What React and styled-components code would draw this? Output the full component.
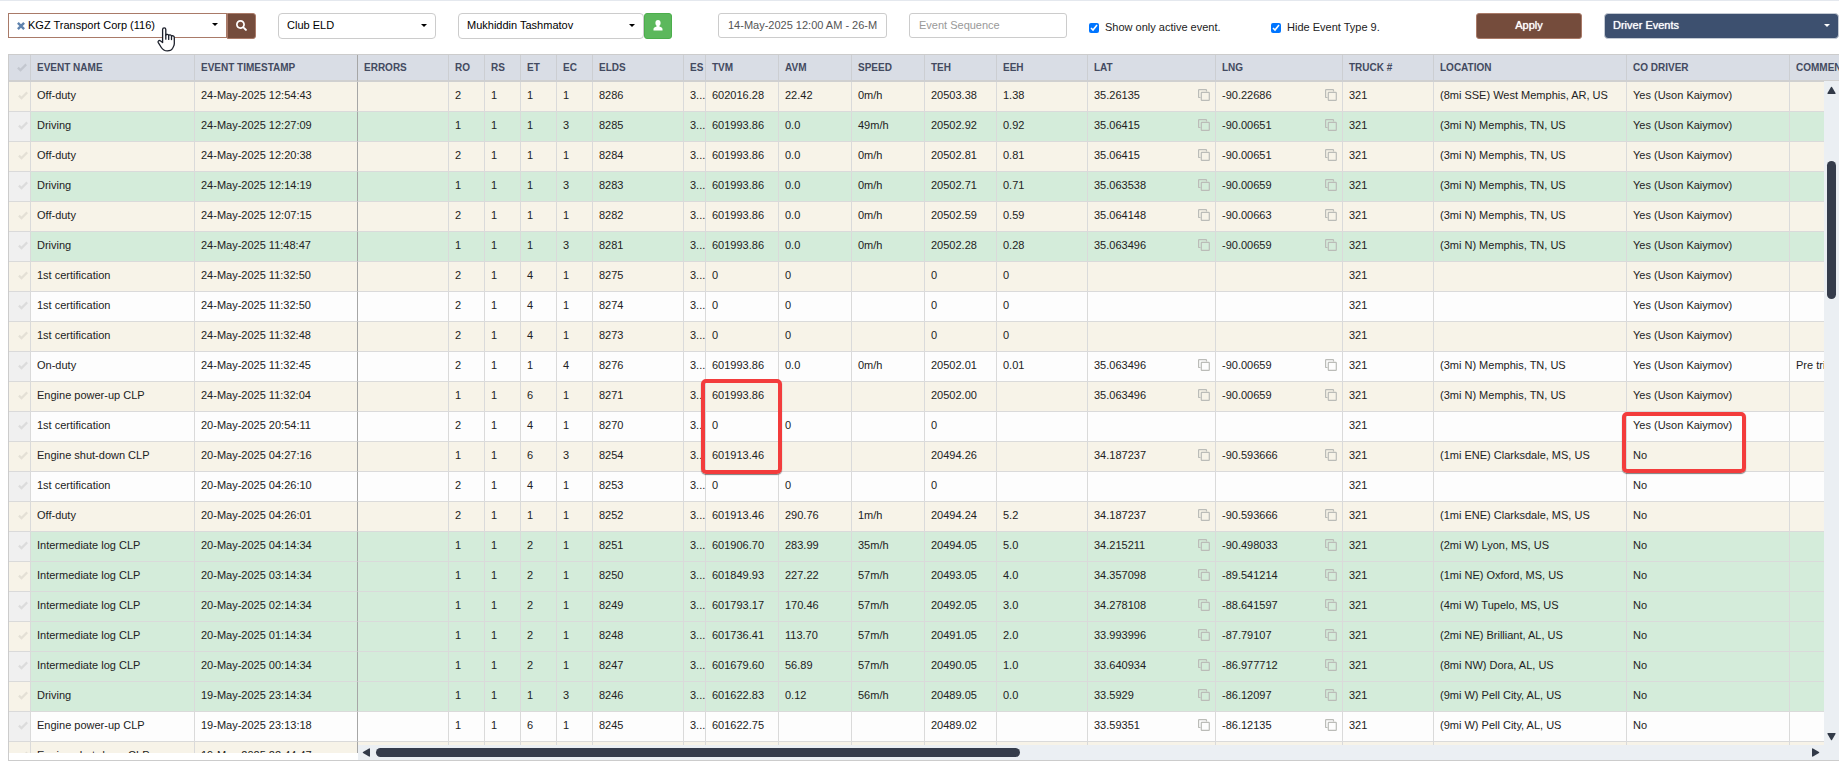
import React, { useState } from 'react'
import styled, { createGlobalStyle } from 'styled-components'
import { FaSearch } from 'react-icons/fa'

const GlobalStyle = createGlobalStyle`
  * {
    box-sizing: border-box;
  }

  body {
    margin: 0;
    background: #fff;
    color: #222;
    font-family: "Liberation Sans", Arial, sans-serif;
    font-size: 11px;
  }

  button, input, select {
    font: inherit;
    margin: 0;
  }
`;

const Page = styled.div`
  height: 100vh;
  display: flex;
  flex-direction: column;
  padding: 0 0 7px 8px;
  border-top: 1px solid #e4e8ee;
  overflow: hidden;
`;

const Toolbar = styled.form`
  display: grid;
  grid-template-columns: 248fr 158fr 238fr 169fr 158fr 160fr 183fr 106fr 235fr;
  column-gap: 22px;
  align-items: start;
  padding: 12px 0 15px;
`;

const Group = styled.div`
  display: flex;
  min-width: 0;
  padding-right: ${({ $end }) => $end || 0}px;
`;

const SelectBox = styled.div`
  position: relative;
  flex: 1;
  min-width: 0;
  height: ${({ $active }) => ($active ? 25 : 26)}px;
  display: flex;
  align-items: center;
  padding: 0 8px;
  color: ${({ $dark }) => ($dark ? '#fff' : '#000')};
  background: ${({ $dark }) => ($dark ? '#3d506f' : '#fff')};
  border: 1px solid ${({ $active, $dark }) => ($active ? '#a97a68' : $dark ? '#c4cad3' : '#ccc')};
  border-radius: ${({ $active }) => ($active ? '0' : '4px')};
`;

const Select = styled.select`
  flex: 1;
  min-width: 0;
  height: 23px;
  padding: 0 0 2px;
  border: none;
  outline: none;
  appearance: none;
  background: transparent;
  color: inherit;
  text-shadow: ${({ $dark }) => ($dark ? '0 0 1px #fff' : 'none')};
`;

const Caret = styled.span`
  margin-bottom: 2px;
  border: 3px solid transparent;
  border-top-color: currentColor;
  border-bottom: none;
`;

const ClearButton = styled.button`
  display: flex;
  padding: 0;
  margin-right: 3px;
  border: none;
  background: none;
  color: #5f83ae;
`;

const IconButton = styled.button`
  width: ${({ $green }) => ($green ? 28 : 29)}px;
  height: 26px;
  display: flex;
  align-items: center;
  justify-content: center;
  padding: 0 0 2px;
  color: #fff;
  background: ${({ $green }) => ($green ? '#5cb85c' : '#754c3c')};
  border: 1px solid ${({ $green }) => ($green ? '#4cae4c' : '#a97a68')};
  border-radius: ${({ $green }) => ($green ? '3px' : '0 3px 3px 0')};
`;

const TextInput = styled.input`
  width: 100%;
  height: 25px;
  padding: 0 9px 2px;
  color: #555;
  background: #fff;
  border: 1px solid #ccc;
  border-radius: 3px;
  outline: none;

  &::placeholder {
    color: #999;
  }
`;

const CheckLabel = styled.label`
  display: flex;
  align-items: center;
  gap: 6px;
  padding-top: 8px;
  white-space: nowrap;

  input {
    width: 10px;
    height: 10px;
    margin: 1px 0 0;
    accent-color: #0075ff;
  }
`;

const ApplyButton = styled.button`
  height: 26px;
  padding: 0 0 2px;
  color: #fff;
  background: #754c3c;
  border: 1px solid #a97a68;
  border-radius: 3px;
  text-shadow: 0 0 1px #fff;
`;

const Hand = styled.svg`
  position: absolute;
  left: 148px;
  top: 13px;
  z-index: 3;
  pointer-events: none;
`;

const Frame = styled.div`
  position: relative;
  flex: 1;
  min-height: 0;
  border: 1px solid #ccc;
  border-right: none;
`;

const Viewport = styled.div`
  height: calc(100% - 7px);
  overflow: hidden;
`;

const Table = styled.table`
  table-layout: fixed;
  width: 1950px;
  border-collapse: separate;
  border-spacing: 0;
`;

const Th = styled.th`
  height: 27px;
  padding: 0 0 0 6px;
  overflow: hidden;
  white-space: nowrap;
  text-align: left;
  font-size: 10px;
  font-weight: 700;
  color: #434a60;
  background: #d9dde5;
  border-right: 1px solid ${({ $pinned }) => ($pinned ? '#a6a6a6' : '#ccced2')};
  border-bottom: 2px solid #d0d0d0;
`;

const CheckTh = styled(Th)`
  padding-left: 8px;
  color: #c3c7cf;

  svg {
    display: block;
  }
`;

const Row = styled.tr`
  background: ${({ $driving, $odd }) => ($driving ? '#d4ecda' : $odd ? '#fdfdfd' : '#f7f3e8')};
`;

const Td = styled.td`
  position: relative;
  height: 30px;
  padding: 0 0 3px 6px;
  white-space: nowrap;
  border-right: 1px solid ${({ $pinned }) => ($pinned ? '#a6a6a6' : '#dadada')};
  border-bottom: 1px solid #dadada;
`;

const CheckTd = styled(Td)`
  padding: 0 0 2px 9px;
  color: ${({ $odd }) => ($odd ? '#dcdcdc' : '#e4e0d6')};
  background: ${({ $odd }) => ($odd ? '#f0f0f0' : '#f7f3e8')};

  svg {
    display: block;
  }
`;

const Coordinate = styled.div`
  display: flex;
  align-items: center;
  justify-content: space-between;
  padding-right: 5px;
`;

const CopyButton = styled.button`
  display: flex;
  height: 12px;
  padding: 0;
  border: none;
  background: none;
  color: #bbbcb8;
`;

const Mark = styled.span`
  position: absolute;
  z-index: 2;
  left: -5px;
  top: ${({ $top }) => $top}px;
  width: ${({ $width }) => $width}px;
  height: ${({ $height }) => $height}px;
  border: 4px solid #f33c3c;
  border-radius: 5px;
  box-shadow: 0 1px 1px rgba(0, 0, 0, 0.5);
  pointer-events: none;
`;

const ScrollBar = styled.div`
  position: absolute;
  z-index: 1;
  right: 0;
  bottom: 0;
  display: flex;
  align-items: center;
  background: #ebeff3;
  color: #323a48;
`;

const HorizontalBar = styled(ScrollBar)`
  left: 349px;
  height: 15px;
  padding: 0 19px 0 4px;
`;

const VerticalBar = styled(ScrollBar)`
  top: 26px;
  bottom: 15px;
  width: 15px;
  flex-direction: column;
  padding: 5px 0 4px;
`;

const ArrowButton = styled.button`
  display: flex;
  padding: 0;
  border: none;
  background: none;
  color: inherit;
`;

const Track = styled.div`
  flex: 1;
  display: flex;
  flex-direction: ${({ $vertical }) => ($vertical ? 'column' : 'row')};
  padding: ${({ $vertical }) => ($vertical ? '66px 0 0' : '0 5px')};
`;

const Thumb = styled.div`
  width: ${({ $vertical }) => ($vertical ? '9px' : '45%')};
  height: ${({ $vertical }) => ($vertical ? '138px' : '9px')};
  border-radius: 5px;
  background: #353c4b;
`;

const columns = [
  { key: 'name', label: 'EVENT NAME', width: 164 },
  { key: 'time', label: 'EVENT TIMESTAMP', width: 163, pinned: true },
  { key: 'errors', label: 'ERRORS', width: 91 },
  { key: 'ro', label: 'RO', width: 36 },
  { key: 'rs', label: 'RS', width: 36 },
  { key: 'et', label: 'ET', width: 36 },
  { key: 'ec', label: 'EC', width: 36 },
  { key: 'elds', label: 'ELDS', width: 91 },
  { key: 'es', label: 'ES', width: 22 },
  { key: 'tvm', label: 'TVM', width: 73 },
  { key: 'avm', label: 'AVM', width: 73 },
  { key: 'speed', label: 'SPEED', width: 73 },
  { key: 'teh', label: 'TEH', width: 72 },
  { key: 'eeh', label: 'EEH', width: 91 },
  { key: 'lat', label: 'LAT', width: 128, copy: true },
  { key: 'lng', label: 'LNG', width: 127, copy: true },
  { key: 'truck', label: 'TRUCK #', width: 91 },
  { key: 'location', label: 'LOCATION', width: 193 },
  { key: 'codriver', label: 'CO DRIVER', width: 163 },
  { key: 'comment', label: 'COMMENT', width: 169 },
];

const uson = 'Yes (Uson Kaiymov)';
const memphis = '(3mi N) Memphis, TN, US';
const clarksdale = '(1mi ENE) Clarksdale, MS, US';

// name, time, ro, rs, et, ec, elds, tvm, avm, speed, teh, eeh, lat, lng, location, codriver, comment
const events = [
  ['Off-duty', '24-May-2025 12:54:43', 2, 1, 1, 1, 8286, '602016.28', '22.42', '0m/h', '20503.38', '1.38', '35.26135', '-90.22686', '(8mi SSE) West Memphis, AR, US', uson],
  ['Driving', '24-May-2025 12:27:09', 1, 1, 1, 3, 8285, '601993.86', '0.0', '49m/h', '20502.92', '0.92', '35.06415', '-90.00651', memphis, uson],
  ['Off-duty', '24-May-2025 12:20:38', 2, 1, 1, 1, 8284, '601993.86', '0.0', '0m/h', '20502.81', '0.81', '35.06415', '-90.00651', memphis, uson],
  ['Driving', '24-May-2025 12:14:19', 1, 1, 1, 3, 8283, '601993.86', '0.0', '0m/h', '20502.71', '0.71', '35.063538', '-90.00659', memphis, uson],
  ['Off-duty', '24-May-2025 12:07:15', 2, 1, 1, 1, 8282, '601993.86', '0.0', '0m/h', '20502.59', '0.59', '35.064148', '-90.00663', memphis, uson],
  ['Driving', '24-May-2025 11:48:47', 1, 1, 1, 3, 8281, '601993.86', '0.0', '0m/h', '20502.28', '0.28', '35.063496', '-90.00659', memphis, uson],
  ['1st certification', '24-May-2025 11:32:50', 2, 1, 4, 1, 8275, '0', '0', '', '0', '0', '', '', '', uson],
  ['1st certification', '24-May-2025 11:32:50', 2, 1, 4, 1, 8274, '0', '0', '', '0', '0', '', '', '', uson],
  ['1st certification', '24-May-2025 11:32:48', 2, 1, 4, 1, 8273, '0', '0', '', '0', '0', '', '', '', uson],
  ['On-duty', '24-May-2025 11:32:45', 2, 1, 1, 4, 8276, '601993.86', '0.0', '0m/h', '20502.01', '0.01', '35.063496', '-90.00659', memphis, uson, 'Pre trip inspection'],
  ['Engine power-up CLP', '24-May-2025 11:32:04', 1, 1, 6, 1, 8271, '601993.86', '', '', '20502.00', '', '35.063496', '-90.00659', memphis, uson],
  ['1st certification', '20-May-2025 20:54:11', 2, 1, 4, 1, 8270, '0', '0', '', '0', '', '', '', '', uson],
  ['Engine shut-down CLP', '20-May-2025 04:27:16', 1, 1, 6, 3, 8254, '601913.46', '', '', '20494.26', '', '34.187237', '-90.593666', clarksdale, 'No'],
  ['1st certification', '20-May-2025 04:26:10', 2, 1, 4, 1, 8253, '0', '0', '', '0', '', '', '', '', 'No'],
  ['Off-duty', '20-May-2025 04:26:01', 2, 1, 1, 1, 8252, '601913.46', '290.76', '1m/h', '20494.24', '5.2', '34.187237', '-90.593666', clarksdale, 'No'],
  ['Intermediate log CLP', '20-May-2025 04:14:34', 1, 1, 2, 1, 8251, '601906.70', '283.99', '35m/h', '20494.05', '5.0', '34.215211', '-90.498033', '(2mi W) Lyon, MS, US', 'No'],
  ['Intermediate log CLP', '20-May-2025 03:14:34', 1, 1, 2, 1, 8250, '601849.93', '227.22', '57m/h', '20493.05', '4.0', '34.357098', '-89.541214', '(1mi NE) Oxford, MS, US', 'No'],
  ['Intermediate log CLP', '20-May-2025 02:14:34', 1, 1, 2, 1, 8249, '601793.17', '170.46', '57m/h', '20492.05', '3.0', '34.278108', '-88.641597', '(4mi W) Tupelo, MS, US', 'No'],
  ['Intermediate log CLP', '20-May-2025 01:14:34', 1, 1, 2, 1, 8248, '601736.41', '113.70', '57m/h', '20491.05', '2.0', '33.993996', '-87.79107', '(2mi NE) Brilliant, AL, US', 'No'],
  ['Intermediate log CLP', '20-May-2025 00:14:34', 1, 1, 2, 1, 8247, '601679.60', '56.89', '57m/h', '20490.05', '1.0', '33.640934', '-86.977712', '(8mi NW) Dora, AL, US', 'No'],
  ['Driving', '19-May-2025 23:14:34', 1, 1, 1, 3, 8246, '601622.83', '0.12', '56m/h', '20489.05', '0.0', '33.5929', '-86.12097', '(9mi W) Pell City, AL, US', 'No'],
  ['Engine power-up CLP', '19-May-2025 23:13:18', 1, 1, 6, 1, 8245, '601622.75', '', '', '20489.02', '', '33.59351', '-86.12135', '(9mi W) Pell City, AL, US', 'No'],
  ['Engine shut-down CLP', '19-May-2025 22:44:47'],
].map(([name, time, ro, rs, et, ec, elds, tvm, avm, speed, teh, eeh, lat, lng, location, codriver, comment]) => ({
  name, time, ro, rs, et, ec, elds, es: elds && '3...', tvm, avm, speed, teh, eeh, lat, lng, truck: elds && 321, location, codriver, comment,
}));

const marks = {
  '8271-tvm': { $top: -3, $width: 81, $height: 95 },
  '8270-codriver': { $top: 0, $width: 124, $height: 61 },
};

const CheckIcon = () => (
  <svg width="10" height="9" viewBox="0 0 10 9" fill="none" stroke="currentColor" strokeWidth="2.2">
    <path d="M.9 4.6 3.500 7.100 9.200 1.400" />
  </svg>
);

const CrossIcon = () => (
  <svg width="8" height="8" viewBox="0 0 8 8" fill="none" stroke="currentColor" strokeWidth="2.4">
    <path d="M.9.9 7.100 7.100M7.100.9.9 7.100" />
  </svg>
);

const PersonIcon = () => (
  <svg width="10" height="11" viewBox="0 0 10 11" fill="currentColor">
    <path d="M5 0c1.700 0 2.600 1.200 2.600 2.900 0 1.200-.5 2.300-1.200 2.900v.6c1.800.5 3.100 1.300 3.100 2.600V10.500H.5V9c0-1.300 1.300-2.100 3.100-2.600v-.6C2.900 5.200 2.400 4.100 2.400 2.900 2.400 1.200 3.300 0 5 0z" />
  </svg>
);

const CopyIcon = () => (
  <svg width="12" height="12" viewBox="0 0 12 12" fill="none" stroke="currentColor" strokeWidth="1.2">
    <path d="M2.5 8.5H1.2a.6.6 0 0 1-.6-.6V1.2a.6.6 0 0 1 .6-.6h6.7a.6.6 0 0 1 .6.6v1.3" />
    <rect x="3.3" y="3.3" width="8" height="8" rx="0.6" />
  </svg>
);

const arrows = {
  left: 'M8 1v7q0 1-1 .5L1 5q-.6-.5 0-1L7 .5Q8 0 8 1z',
  right: 'M1 1v7q0 1 1 .5L8 5q.6-.5 0-1L2 .5Q1 0 1 1z',
  up: 'M1 8h7q1 0 .5-1L5 1q-.5-.6-1 0L.5 7Q0 8 1 8z',
  down: 'M1 1h7q1 0 .5 1L5 8q-.5.6-1 0L.5 2Q0 1 1 1z',
};

const Arrow = ({ to }) => (
  <ArrowButton type="button" aria-label={`Scroll ${to}`}>
    <svg width="9" height="9" viewBox="0 0 9 9" fill="currentColor">
      <path d={arrows[to]} />
    </svg>
  </ArrowButton>
);

const Dropdown = ({ label, options, active, dark, children, pointer }) => (
  <SelectBox $active={active} $dark={dark}>
    {children}
    <Select aria-label={label} $dark={dark}>
      {options.map((o) => (
        <option key={o}>{o}</option>
      ))}
    </Select>
    <Caret />
    {pointer}
  </SelectBox>
);

const HandPointer = () => (
  <Hand width="19" height="25" viewBox="0 0 19 25" fill="#fff" stroke="#1b1f2a" strokeWidth="1.3" strokeLinejoin="round" strokeLinecap="round">
    <path d="M5.6 15.5V2.6c0-2.4 3.2-2.4 3.2 0v5.6c.3-1.3 2.8-1.2 2.9.4.4-1.1 2.7-.9 2.8.7.5-.9 2.8-.6 2.8 1.2v6.2c0 2.2-1.2 3.4-1.7 4.6-.9 2-2.6 2.6-5.3 2.6-3.2 0-4.7-1.3-6-3.400L1.300 15.600c-.7-1.400.6-2.600 2-1.800z" />
    <path d="M8.800 8.200v4M11.700 8.800v3.600M14.500 9.600v3" />
  </Hand>
);

const EventCell = ({ event, column }) => {
  const value = event[column.key];
  const mark = marks[`${event.elds}-${column.key}`];

  return (
    <Td $pinned={column.pinned}>
      {column.copy && value ? (
        <Coordinate>
          {value}
          <CopyButton type="button" aria-label="Copy">
            <CopyIcon />
          </CopyButton>
        </Coordinate>
      ) : (
        value
      )}
      {mark && <Mark {...mark} />}
    </Td>
  );
};

const App = () => {
  const [activeOnly, setActiveOnly] = useState(true);
  const [hideType, setHideType] = useState(true);
  const [range, setRange] = useState('14-May-2025 12:00 AM - 26-May-2025 11:59 PM');
  const [sequence, setSequence] = useState('');

  return (
    <Page>
      <GlobalStyle />
      <Toolbar onSubmit={(e) => e.preventDefault()}>
        <Group>
          <Dropdown label="Company" options={['KGZ Transport Corp (116)']} active pointer={<HandPointer />}>
            <ClearButton type="button" aria-label="Clear company">
              <CrossIcon />
            </ClearButton>
          </Dropdown>
          <IconButton type="button" aria-label="Search">
            <FaSearch />
          </IconButton>
        </Group>
        <Group>
          <Dropdown label="Provider" options={['Club ELD']} />
        </Group>
        <Group $end={24}>
          <Dropdown label="Driver" options={['Mukhiddin Tashmatov']} />
          <IconButton type="button" aria-label="Driver profile" $green>
            <PersonIcon />
          </IconButton>
        </Group>
        <TextInput aria-label="Date range" value={range} onChange={(e) => setRange(e.target.value)} />
        <TextInput
          aria-label="Event sequence"
          placeholder="Event Sequence"
          value={sequence}
          onChange={(e) => setSequence(e.target.value)}
        />
        <CheckLabel>
          <input type="checkbox" checked={activeOnly} onChange={(e) => setActiveOnly(e.target.checked)} />
          Show only active event.
        </CheckLabel>
        <CheckLabel>
          <input type="checkbox" checked={hideType} onChange={(e) => setHideType(e.target.checked)} />
          Hide Event Type 9.
        </CheckLabel>
        <ApplyButton type="submit">Apply</ApplyButton>
        <Group>
          <Dropdown label="Report" options={['Driver Events']} dark />
        </Group>
      </Toolbar>

      <Frame>
        <Viewport>
          <Table>
            <colgroup>
              <col width={22} />
              {columns.map((c) => (
                <col key={c.key} width={c.width} />
              ))}
            </colgroup>
            <thead>
              <tr>
                <CheckTh aria-label="Selected">
                  <CheckIcon />
                </CheckTh>
                {columns.map((c) => (
                  <Th key={c.key} $pinned={c.pinned}>{c.label}</Th>
                ))}
              </tr>
            </thead>
            <tbody>
              {events.map((event, i) => (
                <Row
                  key={event.time + i}
                  $odd={i % 2 === 1}
                  $driving={event.name === 'Driving' || event.name.startsWith('Intermediate')}
                >
                  <CheckTd $odd={i % 2 === 1}>
                    <CheckIcon />
                  </CheckTd>
                  {columns.map((c) => (
                    <EventCell key={c.key} event={event} column={c} />
                  ))}
                </Row>
              ))}
            </tbody>
          </Table>
        </Viewport>
        <VerticalBar>
          <Arrow to="up" />
          <Track $vertical>
            <Thumb $vertical />
          </Track>
          <Arrow to="down" />
        </VerticalBar>
        <HorizontalBar>
          <Arrow to="left" />
          <Track>
            <Thumb />
          </Track>
          <Arrow to="right" />
        </HorizontalBar>
      </Frame>
    </Page>
  )
}

export default App
